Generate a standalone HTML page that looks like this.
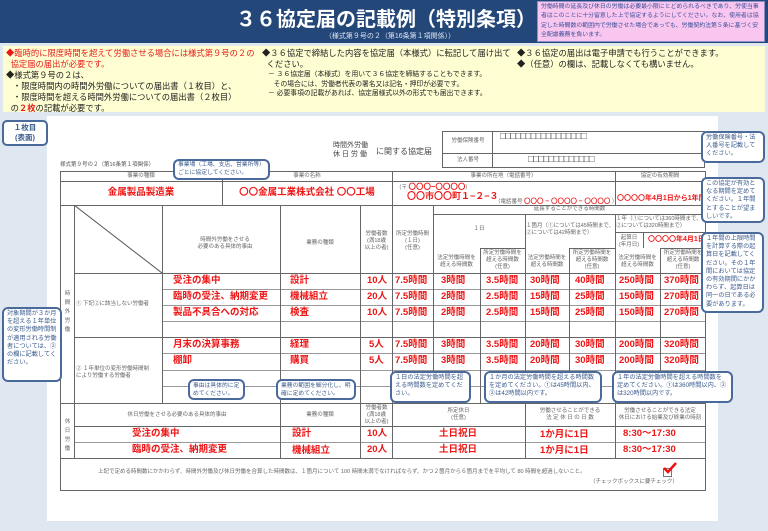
<!DOCTYPE html>
<html><head><meta charset="utf-8"><style>
*{margin:0;padding:0;box-sizing:border-box}
body{width:768px;height:531px;overflow:hidden;background:#dfe7f1;font-family:"Liberation Sans","Noto Sans CJK JP",sans-serif;position:relative}
div{position:absolute}
.h{height:1px;background:#666}
.v{width:1px;background:#666}
.r{color:#ee1515;font-weight:bold;font-size:9.5px;white-space:nowrap;line-height:12px}
.g{color:#666;font-size:5.5px;line-height:7px;text-align:center}
.c{background:#fff;border:2px solid #4a6a9c;border-radius:6px;color:#3b5b8c;font-size:6.2px;line-height:8.2px;padding:1px 3px;overflow:hidden}
.y{font-size:8.3px;line-height:11px;color:#222;white-space:nowrap}
</style></head><body>
<div style="left:0;top:0;width:768px;height:43px;background:#234779"></div>
<div style="left:236px;top:6px;width:300px;text-align:center;color:#fff;font-size:20px;font-weight:bold;line-height:28px;white-space:nowrap">３６協定届の記載例（特別条項）</div>
<div style="left:300px;top:31px;width:180px;text-align:center;color:#dfe6f3;font-size:7px;white-space:nowrap">（様式第９号の２（第16条第１項関係））</div>
<div style="left:537px;top:1px;width:228px;height:41px;background:#f8c6ef;border:1px solid #8a8fc8;color:#3a4f9a;font-size:5.9px;line-height:9.3px;padding:1px 3px;overflow:hidden">労働時間の延長及び休日の労働は必要最小限にとどめられるべきであり、労使当事者はこのことに十分留意した上で協定するようにしてください。なお、使用者は協定した時間数の範囲内で労働させた場合であっても、労働契約法第５条に基づく安全配慮義務を負います。</div>
<div style="left:3px;top:46px;width:762px;height:66px;background:#fffed2"></div>
<div class="y" style="left:6px;top:48px"><span style="color:#e51c1c">◆臨時的に限度時間を超えて労働させる場合には様式第９号の２の<br>&nbsp;&nbsp;協定届の届出が必要です。</span><br>◆様式第９号の２は、<br>&nbsp;&nbsp;&nbsp;・限度時間内の時間外労働についての届出書（１枚目）と、<br>&nbsp;&nbsp;&nbsp;・限度時間を超える時間外労働についての届出書（２枚目）<br>&nbsp;&nbsp;の<b style="color:#e51c1c">２枚</b>の記載が必要です。</div>
<div class="y" style="left:262px;top:48px">◆３６協定で締結した内容を協定届（本様式）に転記して届け出て<br>&nbsp;&nbsp;ください。</div>
<div class="y" style="left:268px;top:70px;font-size:6.8px;line-height:9.5px">－ ３６協定届（本様式）を用いて３６協定を締結することもできます。<br>&nbsp;&nbsp;&nbsp;その場合には、労働者代表の署名又は記名・押印が必要です。<br>－ 必要事項の記載があれば、協定届様式以外の形式でも届出できます。</div>
<div class="y" style="left:517px;top:48px">◆３６協定の届出は電子申請でも行うことができます。<br>◆（任意）の欄は、記載しなくても構いません。</div>
<div style="left:47px;top:116px;width:671px;height:405px;background:#fff"></div>
<div style="left:2px;top:120px;width:46px;height:26px;background:#fff;border:2px solid #4a6a9c;border-radius:5px;color:#3b5b8c;font-size:7.5px;font-weight:bold;text-align:center;line-height:10px;padding-top:1px">１枚目<br>(表面)</div>
<div style="left:333px;top:141px;font-size:7px;line-height:9px;color:#444">時間外労働<br>休 日 労 働</div>
<div style="left:376px;top:146px;font-size:8px;color:#444;white-space:nowrap">に関する協定届</div>
<div style="left:60px;top:160px;font-size:5.5px;color:#555;white-space:nowrap">様式第９号の２（第16条第１項関係）</div>
<div style="left:442px;top:131px;width:263px;height:37px;border:1px solid #666"></div>
<div class="h" style="left:442px;top:153px;width:263px"></div>
<div class="v" style="left:492px;top:131px;height:37px"></div>
<div class="g" style="left:446px;top:138px;width:44px">労働保険番号</div>
<div class="g" style="left:446px;top:157px;width:44px">法人番号</div>
<div style="left:500px;top:131px;font-size:10px;color:#555;letter-spacing:-1px;line-height:12px">□□□□□□□□□□□□□□□□□</div>
<div style="left:528px;top:154px;font-size:10px;color:#555;letter-spacing:-1px;line-height:12px">□□□□□□□□□□□□□</div>
<div class="h" style="left:60px;top:171px;width:646px"></div>
<div class="h" style="left:60px;top:181px;width:646px"></div>
<div class="h" style="left:60px;top:205px;width:646px"></div>
<div class="h" style="left:433px;top:214px;width:273px"></div>
<div class="h" style="left:615px;top:232px;width:91px"></div>
<div class="h" style="left:480px;top:248px;width:45px"></div>
<div class="h" style="left:569px;top:248px;width:46px"></div>
<div class="h" style="left:660px;top:248px;width:46px"></div>
<div class="h" style="left:74px;top:273px;width:632px"></div>
<div class="h" style="left:162px;top:289px;width:544px;background:#999"></div>
<div class="h" style="left:162px;top:305px;width:544px;background:#999"></div>
<div class="h" style="left:162px;top:321px;width:544px;background:#999"></div>
<div class="h" style="left:74px;top:337px;width:632px"></div>
<div class="h" style="left:162px;top:353px;width:544px;background:#999"></div>
<div class="h" style="left:162px;top:370px;width:544px;background:#999"></div>
<div class="h" style="left:162px;top:386px;width:544px;background:#999"></div>
<div class="h" style="left:60px;top:403px;width:646px"></div>
<div class="h" style="left:74px;top:426px;width:632px"></div>
<div class="h" style="left:74px;top:442px;width:632px;background:#999"></div>
<div class="h" style="left:60px;top:458px;width:646px"></div>
<div class="h" style="left:60px;top:490px;width:646px"></div>
<div class="v" style="left:60px;top:171px;height:320px"></div>
<div class="v" style="left:705px;top:171px;height:320px"></div>
<div class="v" style="left:222px;top:171px;height:34px"></div>
<div class="v" style="left:392px;top:171px;height:34px"></div>
<div class="v" style="left:615px;top:171px;height:34px"></div>
<div class="v" style="left:74px;top:205px;height:253px"></div>
<div class="v" style="left:162px;top:205px;height:198px"></div>
<div class="v" style="left:280px;top:205px;height:253px"></div>
<div class="v" style="left:360px;top:205px;height:253px"></div>
<div class="v" style="left:392px;top:205px;height:253px"></div>
<div class="v" style="left:433px;top:205px;height:198px"></div>
<div class="v" style="left:525px;top:214px;height:189px"></div>
<div class="v" style="left:615px;top:214px;height:189px"></div>
<div class="v" style="left:480px;top:248px;height:155px"></div>
<div class="v" style="left:569px;top:248px;height:155px"></div>
<div class="v" style="left:660px;top:248px;height:155px"></div>
<div class="v" style="left:643px;top:232px;height:16px"></div>
<div class="v" style="left:525px;top:403px;height:55px"></div>
<div class="v" style="left:615px;top:403px;height:55px"></div>
<svg style="position:absolute;left:74px;top:205px" width="88" height="68"><line x1="0" y1="0" x2="88" y2="68" stroke="#555" stroke-width="1"/></svg>
<div class="g" style="left:60px;top:173px;width:162px">事業の種類</div>
<div class="g" style="left:222px;top:173px;width:170px">事業の名称</div>
<div class="g" style="left:392px;top:173px;width:223px">事業の所在地（電話番号）</div>
<div class="g" style="left:615px;top:173px;width:90px">協定の有効期間</div>
<div class="r" style="left:60px;top:187px;width:162px;text-align:center">金属製品製造業</div>
<div class="r" style="left:222px;top:187px;width:170px;text-align:center">〇〇金属工業株式会社&nbsp;〇〇工場</div>
<div class="g" style="left:396px;top:182px;text-align:left;white-space:nowrap;line-height:9px">（〒 <span style="color:#ee1515;font-weight:bold;font-size:7.5px">〇〇〇−〇〇〇〇</span>）</div>
<div class="r" style="left:407px;top:190px;font-size:9px">〇〇市〇〇町１−２−３</div>
<div class="g" style="left:495px;top:198px;white-space:nowrap">（電話番号 <span style="color:#e22;font-weight:bold;font-size:6.5px">〇〇〇 − 〇〇〇〇 − 〇〇〇〇</span> ）</div>
<div class="r" style="left:617px;top:193px;font-size:7px">〇〇〇〇年4月1日から1年間</div>
<div class="g" style="left:433px;top:206px;width:273px">延長することができる時間数</div>
<div class="g" style="left:170px;top:237px;width:110px">時間外労働をさせる<br>必要のある具体的事由</div>
<div class="g" style="left:280px;top:240px;width:80px">業務の種類</div>
<div class="g" style="left:361px;top:231px;width:31px">労働者数<br>(満18歳<br>以上の者)</div>
<div class="g" style="left:392px;top:231px;width:41px">所定労働時間<br>(１日)<br>(任意)</div>
<div class="g" style="left:433px;top:226px;width:92px">１日</div>
<div class="g" style="left:526px;top:223px;width:89px;text-align:left">１箇月（①については45時間まで、②については42時間まで）</div>
<div class="g" style="left:616px;top:216px;width:90px;text-align:left">１年（①については360時間まで、②については320時間まで）</div>
<div class="g" style="left:615px;top:235px;width:28px">起算日<br>(年月日)</div>
<div class="r" style="left:648px;top:234px;font-size:7px">〇〇〇〇年4月1日</div>
<div class="g" style="left:433px;top:255px;width:47px">法定労働時間を<br>超える時間数</div>
<div class="g" style="left:480px;top:250px;width:45px">所定労働時間を<br>超える時間数<br>(任意)</div>
<div class="g" style="left:525px;top:255px;width:44px">法定労働時間を<br>超える時間数</div>
<div class="g" style="left:569px;top:250px;width:46px">所定労働時間を<br>超える時間数<br>(任意)</div>
<div class="g" style="left:615px;top:255px;width:45px">法定労働時間を<br>超える時間数</div>
<div class="g" style="left:660px;top:250px;width:46px">所定労働時間を<br>超える時間数<br>(任意)</div>
<div class="g" style="left:63px;top:290px;width:9px;line-height:9px">時<br>間<br>外<br>労<br>働</div>
<div class="g" style="left:63px;top:418px;width:9px;line-height:9px">休<br>日<br>労<br>働</div>
<div class="g" style="left:76px;top:301px;text-align:left;white-space:nowrap">① 下記②に該当しない労働者</div>
<div class="g" style="left:76px;top:366px;text-align:left;width:86px">② １年単位の変形労働時間制<br>により労働する労働者</div>
<div class="r" style="left:173px;top:275px">受注の集中</div><div class="r" style="left:290px;top:275px">設計</div><div class="r" style="left:367px;top:275px">10人</div>
<div class="r" style="left:173px;top:291px">臨時の受注、納期変更</div><div class="r" style="left:290px;top:291px">機械組立</div><div class="r" style="left:367px;top:291px">20人</div>
<div class="r" style="left:173px;top:307px">製品不具合への対応</div><div class="r" style="left:290px;top:307px">検査</div><div class="r" style="left:367px;top:307px">10人</div>
<div class="r" style="left:173px;top:339px">月末の決算事務</div><div class="r" style="left:290px;top:339px">経理</div><div class="r" style="left:369px;top:339px">5人</div>
<div class="r" style="left:173px;top:355px">棚卸</div><div class="r" style="left:290px;top:355px">購買</div><div class="r" style="left:369px;top:355px">5人</div>
<div class="r" style="left:395px;top:275px">7.5時間</div><div class="r" style="left:441px;top:275px">3時間</div><div class="r" style="left:486px;top:275px">3.5時間</div><div class="r" style="left:530px;top:275px">30時間</div><div class="r" style="left:575px;top:275px">40時間</div><div class="r" style="left:619px;top:275px">250時間</div><div class="r" style="left:664px;top:275px">370時間</div>
<div class="r" style="left:395px;top:291px">7.5時間</div><div class="r" style="left:441px;top:291px">2時間</div><div class="r" style="left:486px;top:291px">2.5時間</div><div class="r" style="left:530px;top:291px">15時間</div><div class="r" style="left:575px;top:291px">25時間</div><div class="r" style="left:619px;top:291px">150時間</div><div class="r" style="left:664px;top:291px">270時間</div>
<div class="r" style="left:395px;top:307px">7.5時間</div><div class="r" style="left:441px;top:307px">2時間</div><div class="r" style="left:486px;top:307px">2.5時間</div><div class="r" style="left:530px;top:307px">15時間</div><div class="r" style="left:575px;top:307px">25時間</div><div class="r" style="left:619px;top:307px">150時間</div><div class="r" style="left:664px;top:307px">270時間</div>
<div class="r" style="left:395px;top:339px">7.5時間</div><div class="r" style="left:441px;top:339px">3時間</div><div class="r" style="left:486px;top:339px">3.5時間</div><div class="r" style="left:530px;top:339px">20時間</div><div class="r" style="left:575px;top:339px">30時間</div><div class="r" style="left:619px;top:339px">200時間</div><div class="r" style="left:664px;top:339px">320時間</div>
<div class="r" style="left:395px;top:355px">7.5時間</div><div class="r" style="left:441px;top:355px">3時間</div><div class="r" style="left:486px;top:355px">3.5時間</div><div class="r" style="left:530px;top:355px">20時間</div><div class="r" style="left:575px;top:355px">30時間</div><div class="r" style="left:619px;top:355px">200時間</div><div class="r" style="left:664px;top:355px">320時間</div>
<div class="g" style="left:74px;top:412px;width:206px">休日労働をさせる必要のある具体的事由</div>
<div class="g" style="left:280px;top:412px;width:80px">業務の種類</div>
<div class="g" style="left:361px;top:405px;width:31px">労働者数<br>(満18歳<br>以上の者)</div>
<div class="g" style="left:392px;top:408px;width:133px">所定休日<br>(任意)</div>
<div class="g" style="left:525px;top:408px;width:90px">労働させることができる<br>法 定 休 日 の 日 数</div>
<div class="g" style="left:615px;top:408px;width:90px">労働させることができる法定<br>休日における始業及び終業の時刻</div>
<div class="r" style="left:132px;top:428px">受注の集中</div><div class="r" style="left:292px;top:428px">設計</div><div class="r" style="left:367px;top:428px">10人</div><div class="r" style="left:439px;top:428px">土日祝日</div><div class="r" style="left:540px;top:429px">1か月に1日</div><div class="r" style="left:623px;top:428px">8:30〜17:30</div>
<div class="r" style="left:132px;top:444px">臨時の受注、納期変更</div><div class="r" style="left:292px;top:445px">機械組立</div><div class="r" style="left:367px;top:444px">20人</div><div class="r" style="left:439px;top:444px">土日祝日</div><div class="r" style="left:540px;top:445px">1か月に1日</div><div class="r" style="left:623px;top:444px">8:30〜17:30</div>
<div class="g" style="left:98px;top:469px;white-space:nowrap;text-align:left">上記で定める時間数にかかわらず、時間外労働及び休日労働を合算した時間数は、１箇月について 100 時間未満でなければならず、かつ２箇月から６箇月までを平均して 80 時間を超過しないこと。</div>
<div style="left:663px;top:468px;width:9px;height:9px;border:1px solid #777"></div>
<svg style="position:absolute;left:662px;top:461px" width="16" height="14"><path d="M2 7 L6 11 L14 2" stroke="#e11" stroke-width="2.5" fill="none"/></svg>
<div class="g" style="left:590px;top:479px;white-space:nowrap">（チェックボックスに要チェック）</div>
<div class="c" style="left:173px;top:159px;width:97px;height:21px;font-size:5.8px;line-height:7.5px">事業場（工場、支店、営業所等）ごとに協定してください。</div>
<div class="c" style="left:701px;top:131px;width:64px;height:32px">労働保険番号・法人番号を記載してください。</div>
<div class="c" style="left:701px;top:177px;width:64px;height:46px">この協定が有効となる期間を定めてください。１年間とすることが望ましいです。</div>
<div class="c" style="left:701px;top:232px;width:63px;height:81px">１年間の上限時間を計算する際の起算日を記載してください。その１年間においては協定の有効期間にかかわらず、起算日は同一の日である必要があります。</div>
<div class="c" style="left:2px;top:307px;width:60px;height:75px">対象期間が３か月を超える１年単位の変形労働時間制が適用される労働者については、②の欄に記載してください。</div>
<div class="c" style="left:188px;top:379px;width:57px;height:21px;font-size:5.8px">事由は具体的に定めてください。</div>
<div class="c" style="left:276px;top:379px;width:80px;height:21px;font-size:5.8px">業務の範囲を細分化し、明確に定めてください。</div>
<div class="c" style="left:390px;top:371px;width:81px;height:32px">１日の法定労働時間を超える時間数を定めてください。</div>
<div class="c" style="left:484px;top:371px;width:118px;height:32px">１か月の法定労働時間を超える時間数を定めてください。①は45時間以内、②は42時間以内です。</div>
<div class="c" style="left:612px;top:371px;width:121px;height:32px">１年の法定労働時間を超える時間数を定めてください。①は360時間以内、②は320時間以内です。</div>
</body></html>
